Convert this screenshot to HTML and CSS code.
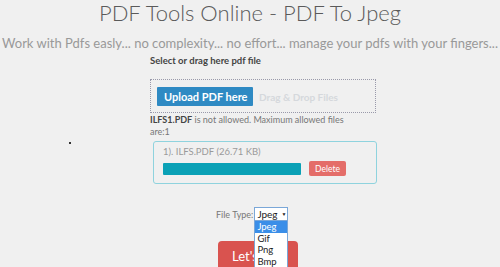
FILE: index.html
```html
<!DOCTYPE html>
<html lang="en">
<head>
  <meta charset="UTF-8" />
  <title>PDF Tools Online - PDF To Jpeg</title>
  <link rel="stylesheet" href="styles.css">
</head>
<body>
  <span class="dot"></span>
  <h1 class="title">PDF Tools Online - PDF To Jpeg</h1>
  <p class="tagline">Work with Pdfs easly... no complexity... no effort... manage your pdfs with your fingers...</p>
  <div class="tool">
    <div class="label">Select or drag here pdf file</div>
    <div class="dropzone">
      <button class="upload">Upload PDF here</button>
      <span class="drag">Drag &amp; Drop Files</span>
    </div>
    <div class="error"><b>ILFS1.PDF</b> is not allowed. Maximum allowed files are:1</div>
    <div class="filebox">
      <div class="filename">1). ILFS.PDF (26.71 KB)</div>
      <div class="filerow">
        <div class="progress"></div>
        <button class="delete">Delete</button>
      </div>
    </div>
  </div>
  <div class="type-row">
    <span class="type-label">File Type:</span>
    <div class="select">
      <span class="select-value">Jpeg</span><span class="caret">&#9660;</span>
      <ul class="options">
        <li class="active">Jpeg</li>
        <li>Gif</li>
        <li>Png</li>
        <li>Bmp</li>
      </ul>
    </div>
  </div>
  <div class="go-row">
    <button class="go">Let's Go</button>
  </div>
</body>
</html>
```
FILE: styles.css
```css
* { box-sizing: border-box; }
html, body {
  margin: 0;
  padding: 0;
  background: #f0f0f0;
  font-family: Lato, "Open Sans", sans-serif;
  overflow: hidden;
}
body { position: relative; height: 267px; }
.dot {
  position: absolute;
  left: 69px; top: 142px;
  width: 2px; height: 2px;
  background: #333;
}
.title {
  margin: 0;
  font-size: 22px;
  font-weight: 300;
  color: #5a5a5a;
  text-align: center;
  line-height: 26px;
}
.tagline {
  margin: 8px 0 0;
  font-size: 13px;
  color: #999;
  text-align: center;
  line-height: 18px;
  white-space: nowrap;
}
.tool {
  width: 227px;
  margin: 2px 0 0 150px;
}
.label {
  font-size: 9.5px;
  font-weight: bold;
  color: #444;
  line-height: 14px;
}
.dropzone {
  margin-top: 11px;
  width: 226px;
  height: 34px;
  border: 1px dotted #99a;
  padding: 5px 6px;
  display: flex;
  align-items: center;
  gap: 6px;
}
.upload {
  width: 96px;
  height: 19px;
  border: none;
  border-radius: 1px;
  background: #2f8ac3;
  color: #fff;
  font: bold 11px Lato, sans-serif;
  padding: 0 0 0 7px;
  text-align: left;
}
.drag {
  font-size: 10px;
  font-weight: bold;
  color: #d5d8dc;
  margin-top: 2px;
}
.error {
  font-size: 9px;
  color: #777;
  line-height: 12px;
  margin-top: 1px;
  width: 205px;
}
.error b { color: #444; }
.filebox {
  margin: 3px 0 0 3px;
  width: 224px;
  height: 43px;
  border: 1px solid #8fd3de;
  border-radius: 3px;
  padding: 4px 9px;
}
.filename {
  font-size: 9.5px;
  color: #9a9a9a;
  line-height: 12px;
}
.filerow {
  display: flex;
  align-items: center;
  gap: 8px;
  margin-top: 3px;
}
.progress {
  width: 138px;
  height: 12px;
  background: #0ba1b6;
  border-radius: 1px;
}
.delete {
  width: 37px;
  height: 15px;
  border: none;
  border-radius: 2px;
  background: #e46d69;
  color: #fff;
  font: 8.5px Lato, sans-serif;
  padding: 0;
}
.type-row {
  margin-top: 23px;
  display: flex;
  align-items: center;
  padding-left: 216px;
  gap: 1px;
}
.type-label {
  font-size: 9px;
  color: #777;
}
.select {
  position: relative;
  width: 34px;
  height: 14px;
  border: 1px solid #7aa7d8;
  background: #fff;
  font-size: 10px;
  color: #222;
  display: flex;
  align-items: center;
  padding-left: 2px;
}
.caret { font-size: 5px; margin-left: 4px; }
.options {
  position: absolute;
  left: -1px; top: 12px;
  width: 34px;
  margin: 0;
  padding: 0;
  list-style: none;
  background: #fff;
  border: 1px solid #7aa7d8;
  z-index: 2;
}
.options li {
  height: 11.5px;
  line-height: 11px;
  padding-left: 2px;
  font-size: 9.5px;
  color: #222;
}
.options li.active { background: #3a8ee8; color: #fff; }
.go-row { margin-top: 20px; padding-left: 218px; }
.go {
  width: 80px;
  height: 30px;
  border: none;
  border-radius: 4px;
  background: #d9534f;
  color: #fff;
  font: 13px Lato, sans-serif;
  text-align: left;
  padding: 0 0 0 14px;
}
```
